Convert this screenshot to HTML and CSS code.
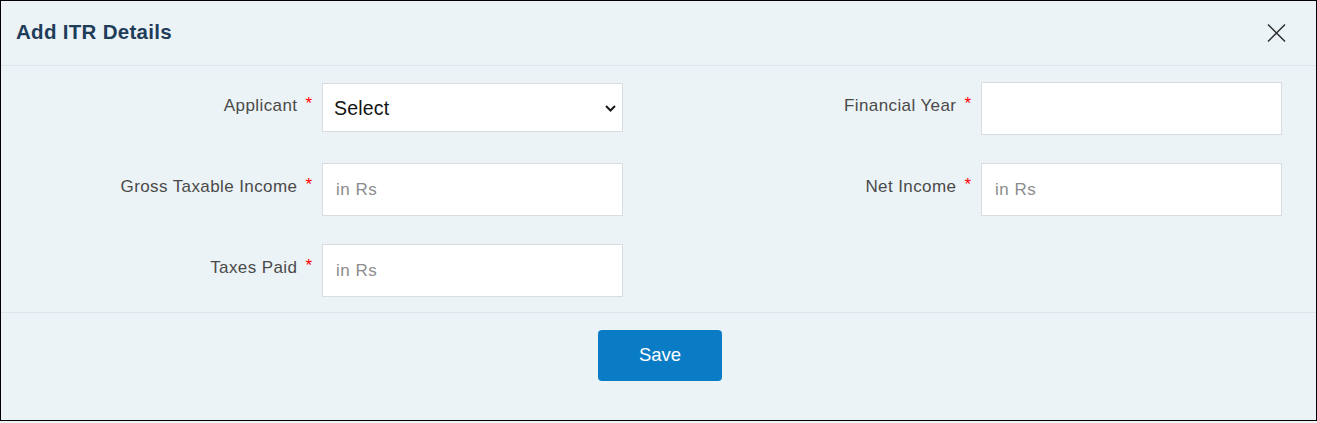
FILE: index.html
```html
<!DOCTYPE html>
<html lang="en">
<head>
<meta charset="utf-8">
<title>Add ITR Details</title>
<link rel="stylesheet" href="styles.css">
</head>
<body>
<div class="modal">
  <div class="modal-header">
    <h4 class="modal-title">Add ITR Details</h4>
    <button class="close-btn" type="button" aria-label="Close">
      <svg width="19" height="20" viewBox="0 0 19 20"><path d="M1 1.5 L18 18.5 M18 1.5 L1 18.5" stroke="#2b2b2b" stroke-width="1.5" fill="none"/></svg>
    </button>
  </div>
  <div class="modal-body">
    <div class="form-grid">
      <div class="field">
        <label class="field-label">Applicant<span class="req">*</span></label>
        <div class="select-wrap">
          <select class="field-select"><option>Select</option></select>
          <svg class="chevron" width="11" height="7" viewBox="0 0 11 7"><path d="M1 1 L5.5 5.5 L10 1" stroke="#1a1a1a" stroke-width="2" fill="none"/></svg>
        </div>
      </div>
      <div class="field">
        <label class="field-label">Financial Year<span class="req">*</span></label>
        <input class="field-input" type="text">
      </div>
      <div class="field">
        <label class="field-label">Gross Taxable Income<span class="req">*</span></label>
        <input class="field-input" type="text" placeholder="in Rs">
      </div>
      <div class="field">
        <label class="field-label">Net Income<span class="req">*</span></label>
        <input class="field-input" type="text" placeholder="in Rs">
      </div>
      <div class="field">
        <label class="field-label">Taxes Paid<span class="req">*</span></label>
        <input class="field-input" type="text" placeholder="in Rs">
      </div>
    </div>
  </div>
  <div class="modal-footer">
    <button class="btn-save" type="button">Save</button>
  </div>
</div>
</body>
</html>
```
FILE: styles.css
```css
* { box-sizing: border-box; }
html, body {
  margin: 0;
  padding: 0;
  background: #ecf3f6;
  font-family: "Liberation Sans", Arial, sans-serif;
}
.modal {
  width: 1317px;
  height: 421px;
  border: 1px solid #000;
  background: #ecf3f6;
  display: flex;
  flex-direction: column;
}
.modal-header {
  height: 65px;
  flex: none;
  border-bottom: 1px solid #dde5ec;
  display: flex;
  align-items: center;
  justify-content: space-between;
  padding: 0 30px 2px 15px;
}
.modal-title {
  margin: 0;
  font-size: 20.5px;
  font-weight: bold;
  letter-spacing: 0.3px;
  color: #1e3d5a;
}
.close-btn {
  border: 0;
  background: transparent;
  padding: 0;
  width: 19px;
  height: 20px;
  display: flex;
  margin-top: 2px;
}
.modal-body {
  flex: none;
  padding: 16px 0 15px 0;
}
.form-grid {
  display: grid;
  grid-template-columns: 622px 622px;
  column-gap: 37px;
  row-gap: 28px;
}
.field {
  display: grid;
  grid-template-columns: 1fr 301px;
  column-gap: 10px;
  height: 53px;
}
.field-label {
  text-align: right;
  font-size: 17px;
  line-height: 20px;
  letter-spacing: 0.4px;
  padding-top: 12px;
  color: #4a4a4a;
  white-space: nowrap;
}
.req {
  color: #f00;
  margin-left: 8px;
  font-size: 17px;
  letter-spacing: 0;
  vertical-align: 2px;
}
.field-input {
  height: 53px;
  width: 301px;
  border: 1px solid #dadde0;
  background: #fff;
  padding: 0 12px 0 13px;
  font-family: "Liberation Sans", Arial, sans-serif;
  font-size: 17px;
  letter-spacing: 0.5px;
  color: #333;
  outline: none;
}
.field-input::placeholder {
  color: #8c8c8c;
}
.select-wrap {
  position: relative;
  margin-top: 1px;
  height: 49px;
}
.field-select {
  appearance: none;
  -webkit-appearance: none;
  width: 301px;
  height: 49px;
  border: 1px solid #dadde0;
  background: #fff;
  padding: 1px 12px 0 11px;
  font-family: "Liberation Sans", Arial, sans-serif;
  font-size: 19.5px;
  letter-spacing: 0.2px;
  color: #141414;
  border-radius: 0;
  outline: none;
}
.chevron {
  position: absolute;
  right: 7px;
  top: 22px;
}
.modal-footer {
  flex: 1;
  border-top: 1px solid #dde5ec;
  display: flex;
  justify-content: center;
  align-items: flex-start;
  padding: 17px 0 0 3px;
}
.btn-save {
  width: 124px;
  height: 51px;
  border: 0;
  border-radius: 4px;
  background: #0a7cc5;
  color: #fff;
  font-family: "Liberation Sans", Arial, sans-serif;
  font-size: 18.5px;
  padding: 0 0 2px 0;
}
```
